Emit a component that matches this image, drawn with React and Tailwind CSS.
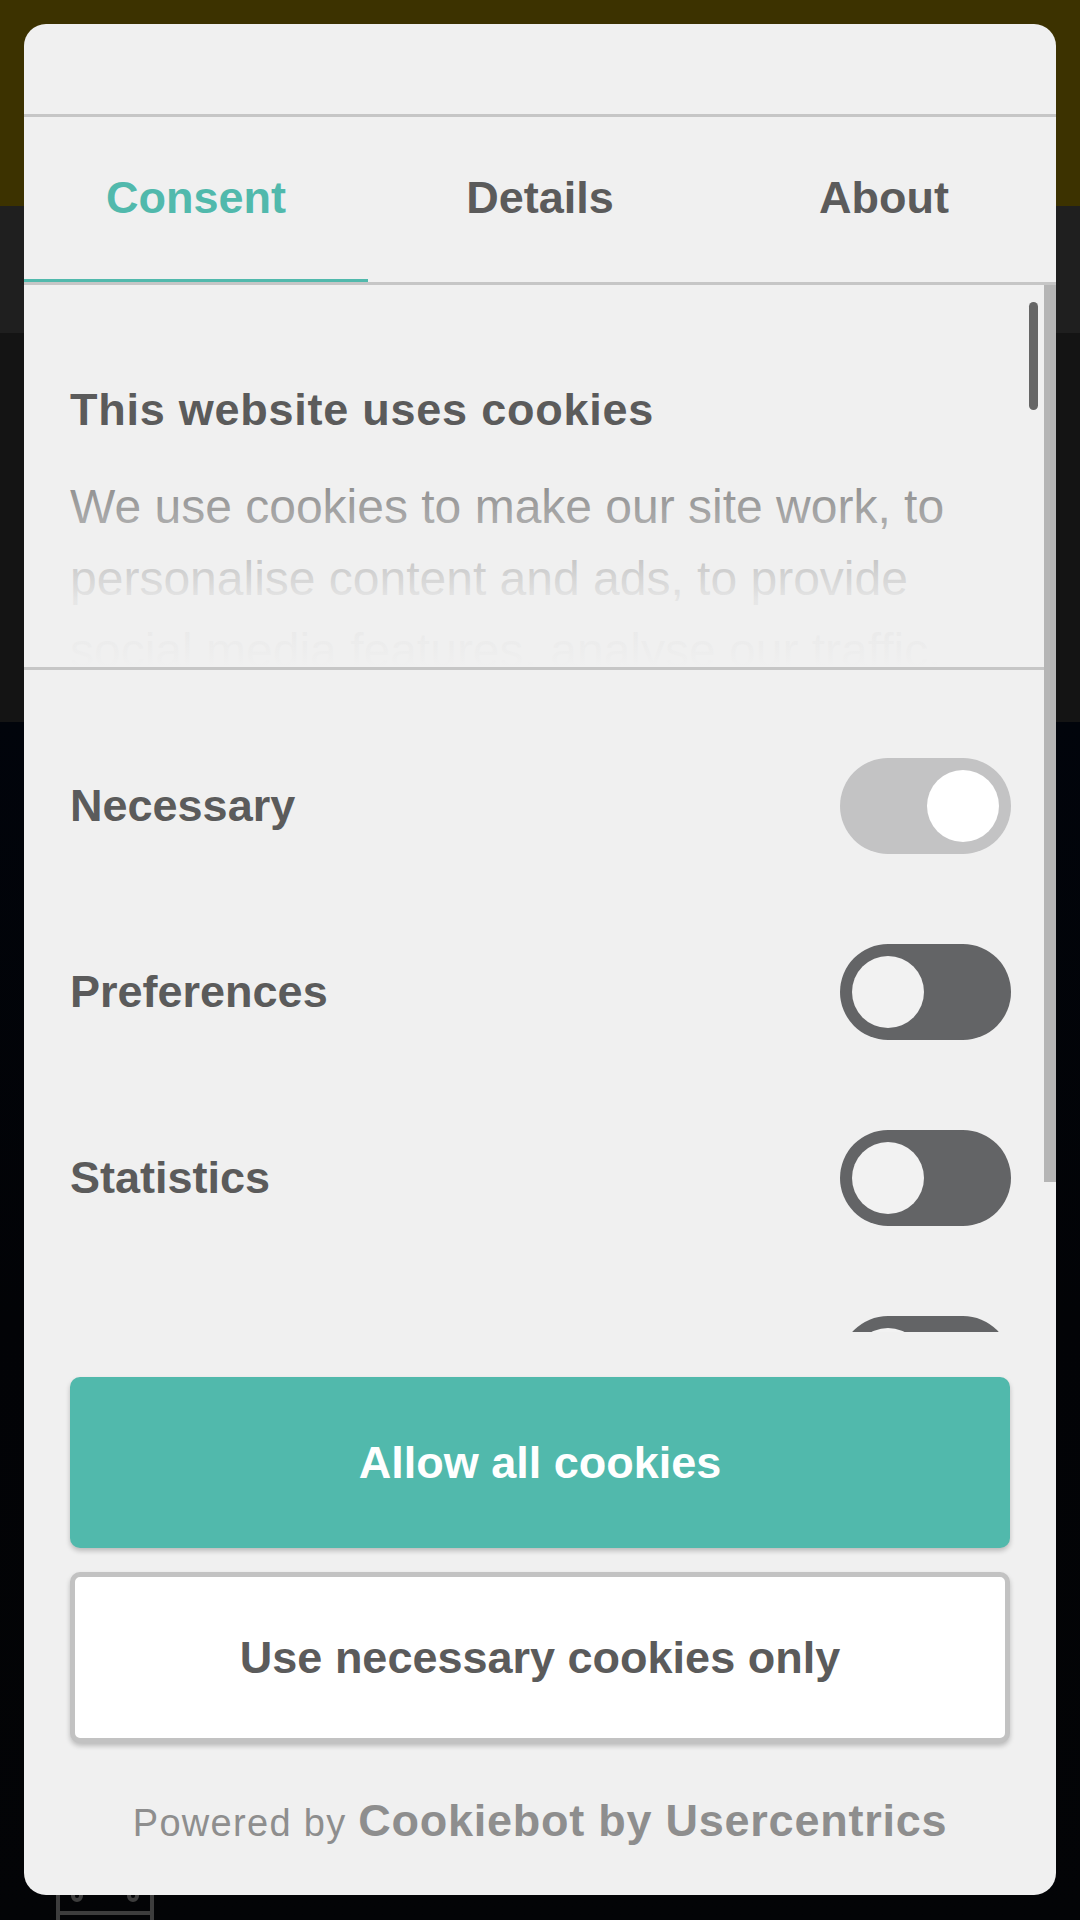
import React from "react";

const Toggle = ({ on, disabled }) => {
    const track = disabled ? "bg-[#c3c3c4]" : on ? "bg-[#51b9ac]" : "bg-[#636466]";
    return (
        <div className={`relative w-[171px] h-[96px] rounded-full shrink-0 ${track}`}>
            <div
                className={`absolute top-[12px] w-[72px] h-[72px] rounded-full ${on ? "right-[12px] bg-white" : "left-[12px] bg-[#f2f2f2]"}`}
            />
        </div>
    );
};

// last row is scrolled out of view, only the top of its switch shows
const categories = [
    { name: "Necessary", on: true, disabled: true },
    { name: "Preferences", on: false },
    { name: "Statistics", on: false },
    { name: "", on: false },
];

const tabs = ["Consent", "Details", "About"];

const App = () => {
    return (
        <div className="relative w-[1080px] h-[1920px] overflow-hidden bg-[#020305] font-['Liberation_Sans',Arial,sans-serif]">
            {/* page behind the dialog */}
            <div className="h-[206px] bg-[#3c3200]" />
            <div className="h-[127px] bg-[#1f1f1f]" />
            <div className="h-[389px] bg-[#141414]" />
            <div className="h-[1198px] bg-gradient-to-b from-[#01040b] via-[#020306] to-[#030406]" />

            {/* chair icon peeking out under the dialog */}
            <svg
                className="absolute left-[54px] top-[1870px]"
                width="102"
                height="50"
                viewBox="0 0 102 50"
                fill="none"
                stroke="#3d3d3d"
                strokeWidth="4"
            >
                <path d="M4 0 V50 M98 0 V50 M4 43 H98" />
                <path d="M19 14 V26 a4 4 0 0 0 8 0 V14" />
                <path d="M75 14 V26 a4 4 0 0 0 8 0 V14" />
            </svg>

            {/* cookie dialog */}
            <div className="absolute left-[24px] top-[24px] w-[1032px] h-[1871px] bg-[#f0f0f0] rounded-[22px] overflow-hidden flex flex-col">
                {/* header */}
                <div className="h-[93px] shrink-0 border-b-[3px] border-[#c6c6c6]" />

                {/* tabs */}
                <div className="h-[168px] shrink-0 flex border-b-[3px] border-[#c6c6c6]">
                    {tabs.map((tab, i) => (
                        <div key={tab} className="flex-1 flex flex-col">
                            <div
                                className={`flex-1 flex items-center justify-center text-[45px] font-bold ${i === 0 ? "text-[#51b9ac]" : "text-[#5b5b5b]"}`}
                            >
                                {tab}
                            </div>
                            <div className={`h-[3px] ${i === 0 ? "bg-[#51b9ac]" : ""}`} />
                        </div>
                    ))}
                </div>

                {/* scrolling content */}
                <div className="relative h-[1047px] shrink-0 overflow-hidden">
                    <div className="relative h-[385px] overflow-hidden border-b-[3px] border-[#c6c6c6] pl-[46px] pr-[46px] pt-[95px]">
                        <h2 className="text-[45px] leading-[60px] font-bold tracking-[0.75px] text-[#5b5b5b]">
                            This website uses cookies
                        </h2>
                        <p className="mt-[31px] text-[48px] leading-[72px] text-[#5b5b5b]">
                            We use cookies to make our site work, to personalise content and ads, to provide
                            social media features, analyse our traffic.
                        </p>
                        {/* fade */}
                        <div className="absolute left-0 right-0 top-[190px] bottom-0 bg-[linear-gradient(to_bottom,rgba(240,240,240,0.3)_0%,rgba(240,240,240,0.93)_65%,#f0f0f0_100%)]" />
                        {/* inner scrollbar */}
                        <div className="absolute left-[1005px] top-[17px] w-[9px] h-[108px] rounded-full bg-[#666666]" />
                    </div>

                    <div className="pt-[43px]">
                        {categories.map((c, i) => (
                            <div
                                key={i}
                                className="h-[186px] flex items-center justify-between pl-[46px] pr-[45px]"
                            >
                                <span className="text-[45px] font-bold text-[#5b5b5b]">{c.name}</span>
                                <Toggle on={c.on} disabled={c.disabled} />
                            </div>
                        ))}
                    </div>

                    {/* outer scrollbar */}
                    <div className="absolute right-0 top-0 w-[12px] h-[897px] bg-[#b5b5b5]" />
                </div>

                {/* buttons */}
                <div className="px-[46px] pt-[45px]">
                    <button className="w-full h-[171px] rounded-[10px] bg-[#51b9ac] text-white text-[45px] font-bold shadow-[0_3px_5px_rgba(0,0,0,0.22)]">
                        Allow all cookies
                    </button>
                    <button className="mt-[24px] w-full h-[171px] rounded-[10px] bg-white border-[5px] border-[#c2c2c2] text-[#5b5b5b] text-[45px] font-bold shadow-[0_3px_5px_rgba(0,0,0,0.22)]">
                        Use necessary cookies only
                    </button>
                    <div className="mt-[48px] h-[60px] leading-[60px] text-center text-[#8e8e8e] whitespace-nowrap">
                        <span className="text-[38px] tracking-[1.3px]">Powered by </span>
                        <span className="text-[45px] font-bold tracking-[0.75px]">Cookiebot by Usercentrics</span>
                    </div>
                </div>
            </div>
        </div>
    );
};

export default App;
